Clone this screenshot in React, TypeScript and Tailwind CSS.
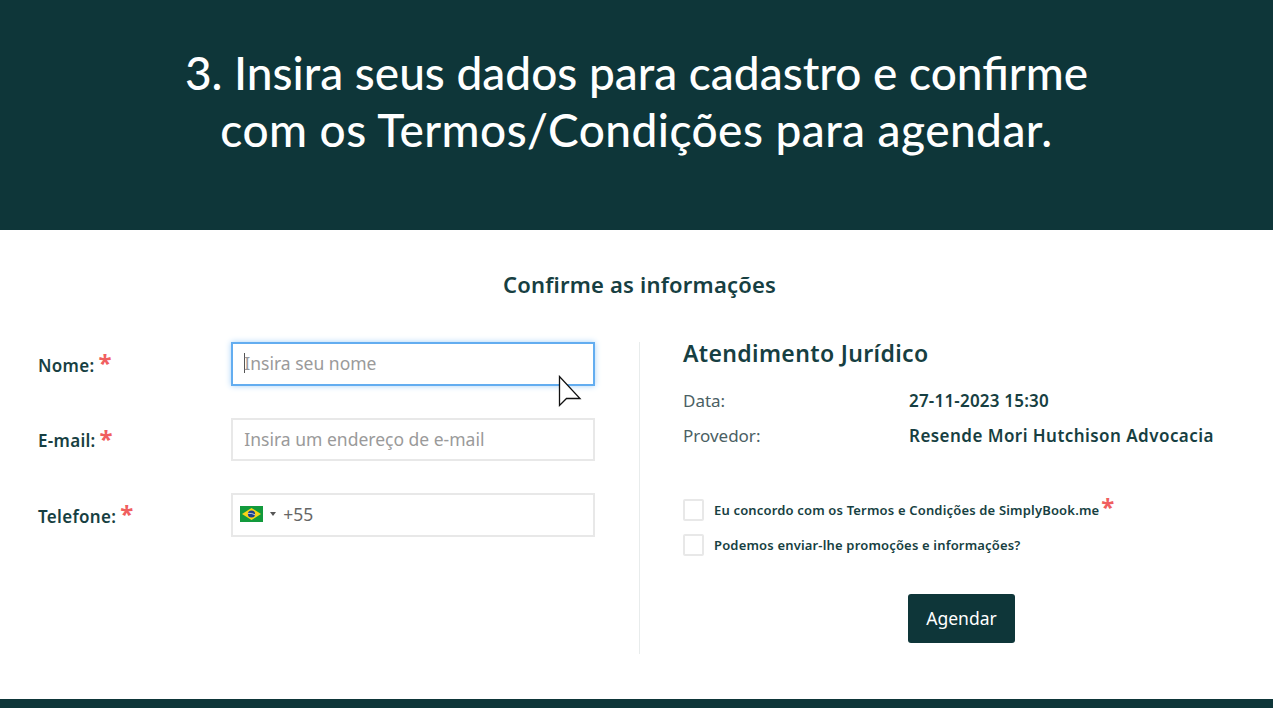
import React from 'react';

const Req = ({ className = '' }: { className?: string }) => (
  <span className={`text-[#f05f5f] text-[24px] leading-none font-bold ${className}`}>*</span>
);

const Field = ({ label, children }: { label: string; children: React.ReactNode }) => (
  <div className="flex items-center h-[43.5px]">
    <div className="w-[193.5px] flex items-center gap-[4px] text-[17px] font-semibold text-[#173f42] pt-[3px] tracking-[0.3px]">
      <span>{label}</span>
      <Req className="-mt-[4px]" />
    </div>
    {children}
  </div>
);

const BrazilFlag = () => (
  <svg width="23" height="16" viewBox="0 0 23 16">
    <rect width="23" height="16" fill="#129a3c" />
    <path d="M11.5 2 L21 8 L11.5 14 L2 8 Z" fill="#f7d417" />
    <circle cx="11.5" cy="8" r="3.6" fill="#1d3f8c" />
    <path d="M8 7.4 Q11.5 6.8 15 8.8" stroke="#fff" strokeWidth="0.7" fill="none" />
  </svg>
);

const Check = ({ children }: { children: React.ReactNode }) => (
  <div className="flex items-center gap-[10px] h-[22px]">
    <span className="w-[21px] h-[22px] border-2 border-[#e8e8e8] rounded-[2px] bg-white shrink-0" />
    <span className="relative mt-[2px] text-[13px] font-semibold text-[#173f42] tracking-[0.17px]">{children}</span>
  </div>
);

const App: React.FC = () => {
  return (
    <div className="w-[1273px] h-[708px] overflow-hidden flex flex-col bg-white font-['Noto_Sans','Open_Sans',sans-serif]">
      <header className="h-[230px] bg-[#0e3639] flex justify-center pt-[44px]">
        <h1 className="text-center text-white text-[46px] leading-[57px] font-medium font-['Lato',sans-serif] whitespace-nowrap">
          3. Insira seus dados para cadastro e confirme
          <br />
          <span className="tracking-[0.45px]">com os Termos/Condições para agendar.</span>
        </h1>
      </header>

      <main className="flex-1 flex flex-col">
        <h2 className="text-center text-[22px] leading-[28px] font-semibold text-[#173f42] mt-[40px] pl-[6px] tracking-[0.2px]">
          Confirme as informações
        </h2>

        <div className="flex mt-[44px] pl-[38px]">
          <div className="w-[557px] flex flex-col gap-[32px]">
            <Field label="Nome:">
              <div className="relative w-[364px] h-[43.5px] border-2 border-[#63adf0] shadow-[0_0_6px_#a9d2f7] flex items-center pl-[11px] pb-[1px] text-[17.5px] text-[#9a9a9a]">
                <span className="w-px h-[20px] bg-[#555] mr-[-1px]" />
                Insira seu nome
                <svg className="absolute left-[325px] top-[31px]" width="24" height="34" viewBox="0 0 24 34">
                  <path d="M1.5 1.5 V30.5 L8.5 23.5 H22 Z" fill="#fff" stroke="#111" strokeWidth="1.3" />
                </svg>
              </div>
            </Field>
            <Field label="E-mail:">
              <div className="w-[364px] h-[43.5px] border-2 border-[#e8e8e8] flex items-center pl-[11px] pb-[1px] text-[17.5px] text-[#9a9a9a]">
                Insira um endereço de e-mail
              </div>
            </Field>
            <Field label="Telefone:">
              <div className="w-[364px] h-[43.5px] border-2 border-[#e8e8e8] flex items-center pl-[7px] pb-[1px] text-[17.5px] text-[#666]">
                <BrazilFlag />
                <span className="ml-[7px] w-0 h-0 border-x-[3px] border-x-transparent border-t-[4px] border-t-[#555]" />
                <span className="ml-[7px]">+55</span>
              </div>
            </Field>
          </div>

          <div className="w-px h-[312px] bg-[#e8ecec] ml-[44px]" />

          <div className="pl-[43px] flex-1">
            <h3 className="text-[23px] leading-[26px] -mt-[2px] font-semibold text-[#173f42] tracking-[0.35px]">
              Atendimento Jurídico
            </h3>
            <div className="mt-[23px] flex flex-col gap-[12px] text-[17px] leading-[23px] text-[#4a6063]">
              <div className="flex">
                <span className="w-[226px]">Data:</span>
                <span className="font-semibold text-[#173f42] tracking-[0.2px]">27-11-2023 15:30</span>
              </div>
              <div className="flex">
                <span className="w-[226px]">Provedor:</span>
                <span className="font-semibold text-[#173f42] tracking-[0.45px]">Resende Mori Hutchison Advocacia</span>
              </div>
            </div>
            <div className="mt-[52px] flex flex-col gap-[13px]">
              <Check>
                Eu concordo com os Termos e Condições de SimplyBook.me
                <Req className="absolute left-full ml-[2px] top-[-6px]" />
              </Check>
              <Check>Podemos enviar-lhe promoções e informações?</Check>
            </div>
            <button className="block ml-[225px] mt-[38px] w-[107px] h-[49px] bg-[#0e3639] text-white text-[17.5px] rounded-[3px]">
              Agendar
            </button>
          </div>
        </div>
      </main>

      <footer className="h-[9px] bg-[#0e3639]" />
    </div>
  );
};

export default App;
